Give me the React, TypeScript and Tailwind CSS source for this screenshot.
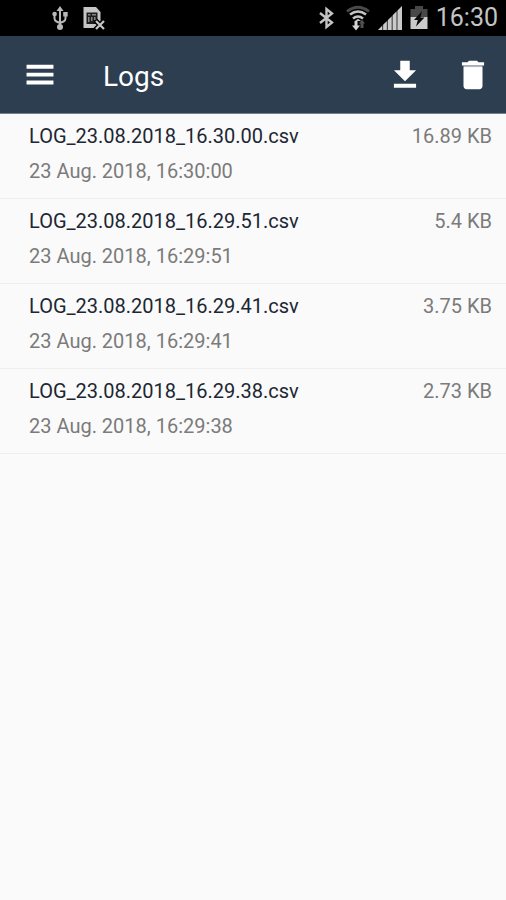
import type { ReactNode } from 'react';

type LogFile = {
  name: string;
  date: string;
  size: string;
};

const LOGS: LogFile[] = [
  { name: 'LOG_23.08.2018_16.30.00.csv', date: '23 Aug. 2018, 16:30:00', size: '16.89 KB' },
  { name: 'LOG_23.08.2018_16.29.51.csv', date: '23 Aug. 2018, 16:29:51', size: '5.4 KB' },
  { name: 'LOG_23.08.2018_16.29.41.csv', date: '23 Aug. 2018, 16:29:41', size: '3.75 KB' },
  { name: 'LOG_23.08.2018_16.29.38.csv', date: '23 Aug. 2018, 16:29:38', size: '2.73 KB' },
];

function UsbIcon() {
  return (
    <svg viewBox="0 0 16 24" className="w-4 h-6" fill="none" stroke="#b8b8b8" strokeWidth="2">
      <path d="M8 4v17M2.5 8.500v4q0 2 2 3L8 17M13.500 8.500v4q0 2-2 3L8 17" />
      <path d="M8 0l3.500 5h-7z" fill="#b8b8b8" stroke="none" />
      <circle cx="8" cy="21" r="3" fill="#b8b8b8" stroke="none" />
      <circle cx="2.600" cy="8" r="2.300" fill="#b8b8b8" stroke="none" />
      <path d="M11.200 6h4.500v4.500h-4.500z" fill="#b8b8b8" stroke="none" />
    </svg>
  );
}

function NoSimIcon() {
  return (
    <svg viewBox="0 0 24 24" className="size-6" fill="none">
      <path d="M1.500 1H14l4.500 5v16h-17z" fill="#c6c6c6" />
      <path d="M4.500 6.500h11V18h-11z" fill="#1c1c1c" />
      <path d="M6 8h2.500v1.500H6zM10 8h4v1.500h-4zM6 11h1.500v5H6zM9 11h1.500v4H9zM12 11h1.500v3H12z" fill="#858585" />
      <path d="M13.500 14.500l9 9M22.500 14.500l-9 9" stroke="#000" strokeWidth="5" />
      <path d="M14 15l8 8M22 15l-8 8" stroke="#c6c6c6" strokeWidth="2.200" />
    </svg>
  );
}

function BluetoothIcon() {
  return (
    <svg viewBox="0 0 16 24" className="w-4 h-6" fill="none" stroke="#c4c4c4" strokeWidth="2.400">
      <path d="M2 7l12 9.500-5.500 4.500V3L14 7.500 2 17" />
    </svg>
  );
}

function WifiIcon() {
  return (
    <svg viewBox="0 0 24 26" className="w-6 h-6.5" fill="none">
      <path d="M1 6.500Q12-2 23 6.500" stroke="#4a4a4a" strokeWidth="2.800" />
      <path d="M4 9.500q8-6 16 0" stroke="#c4c4c4" strokeWidth="2.600" />
      <path d="M7 13.500q5-4 10 0" stroke="#c4c4c4" strokeWidth="2.600" />
      <path d="M12 13.800l3 2.200H9z" fill="#c4c4c4" />
      <path d="M8.500 16h3v4.500H14l-4 5-4-5h2.500z" fill="#d4d4d4" />
      <path d="M14.500 23v-4.500H13l3-4 3 4h-1.500V23z" fill="#505050" />
    </svg>
  );
}

function SignalIcon() {
  return (
    <svg viewBox="0 0 24 24" className="size-6">
      <path d="M0 24L24 0v24z" fill="#4c4c4c" />
      <path d="M0 24l4-4v4zM5.200 18.800l3.600-3.600V24H5.200zM10 14l3.600-3.600V24H10zM14.800 9.200l3.600-3.600V24h-3.600zM19.600 4.400L24 0v24h-4.400z" fill="#cacaca" />
    </svg>
  );
}

function BatteryIcon() {
  return (
    <svg viewBox="0 0 18 24" className="w-4.5 h-6">
      <path d="M5 0h8v3h4.500v8H.500V3H5z" fill="#484848" />
      <path d="M.500 11h17v12H.500z" fill="#cacaca" />
      <path d="M12 5L4 14h3.800L6 20.500l8.500-9h-4z" fill="#0a0a0a" />
    </svg>
  );
}

function IconButton({ label, children }: { label: string; children: ReactNode }) {
  return (
    <button type="button" aria-label={label} className="shrink-0 text-white">
      <svg viewBox="0 0 24 24" className="size-9.5" fill="currentColor">
        {children}
      </svg>
    </button>
  );
}

function StatusBar() {
  return (
    <div className="flex h-9 items-center justify-between bg-black pl-13 pr-2">
      <div className="flex items-center gap-3.5">
        <UsbIcon />
        <NoSimIcon />
      </div>
      <div className="flex items-center gap-2">
        <div className="flex items-center gap-3">
          <BluetoothIcon />
          <WifiIcon />
        </div>
        <div className="flex items-center gap-2">
          <SignalIcon />
          <BatteryIcon />
        </div>
        <span className="text-[25px] leading-9 text-[#c4c4c4]">16:30</span>
      </div>
    </div>
  );
}

export default function App() {
  return (
    <div className="min-h-screen bg-[#fafafa] font-[Roboto,sans-serif]">
      <StatusBar />

      <header className="flex h-[78px] items-center border-b border-[#76818c] bg-[#2c3e50] pl-[21px] pr-3.5">
        <IconButton label="Open menu">
          <path d="M3.500 18h17v-2.500h-17zM3.500 13h17v-2.500h-17zM3.500 5.500V8h17V5.500z" />
        </IconButton>
        <h1 className="flex-1 pl-11 pt-1 text-[28px] leading-9 text-white">Logs</h1>
        <div className="flex items-center gap-7.5">
          <IconButton label="Download logs">
            <path d="M19 9h-4V3H9v6H5l7 7 7-7zM5 17.500V20h14v-2.500H5z" />
          </IconButton>
          <IconButton label="Delete logs">
            <path d="M6 19c0 1.100.9 2 2 2h8c1.100 0 2-.9 2-2V7H6v12zM19 4h-3.500l-1-1h-5l-1 1H5v2h14V4z" />
            <path d="M6 6h12v1H6z" fill="#b4b9be" />
          </IconButton>
        </div>
      </header>

      <main>
        <ul>
          {LOGS.map((log) => (
            <li
              key={log.name}
              className="flex h-[85px] items-start justify-between border-b border-[#efefef] pl-[29px] pr-3.5 pt-[5px] text-[20px] leading-[35px] text-[#7b7b7b]"
            >
              <div>
                <p className="text-[#1c2733]">{log.name}</p>
                <p>{log.date}</p>
              </div>
              <span>{log.size}</span>
            </li>
          ))}
        </ul>
      </main>
    </div>
  );
}
